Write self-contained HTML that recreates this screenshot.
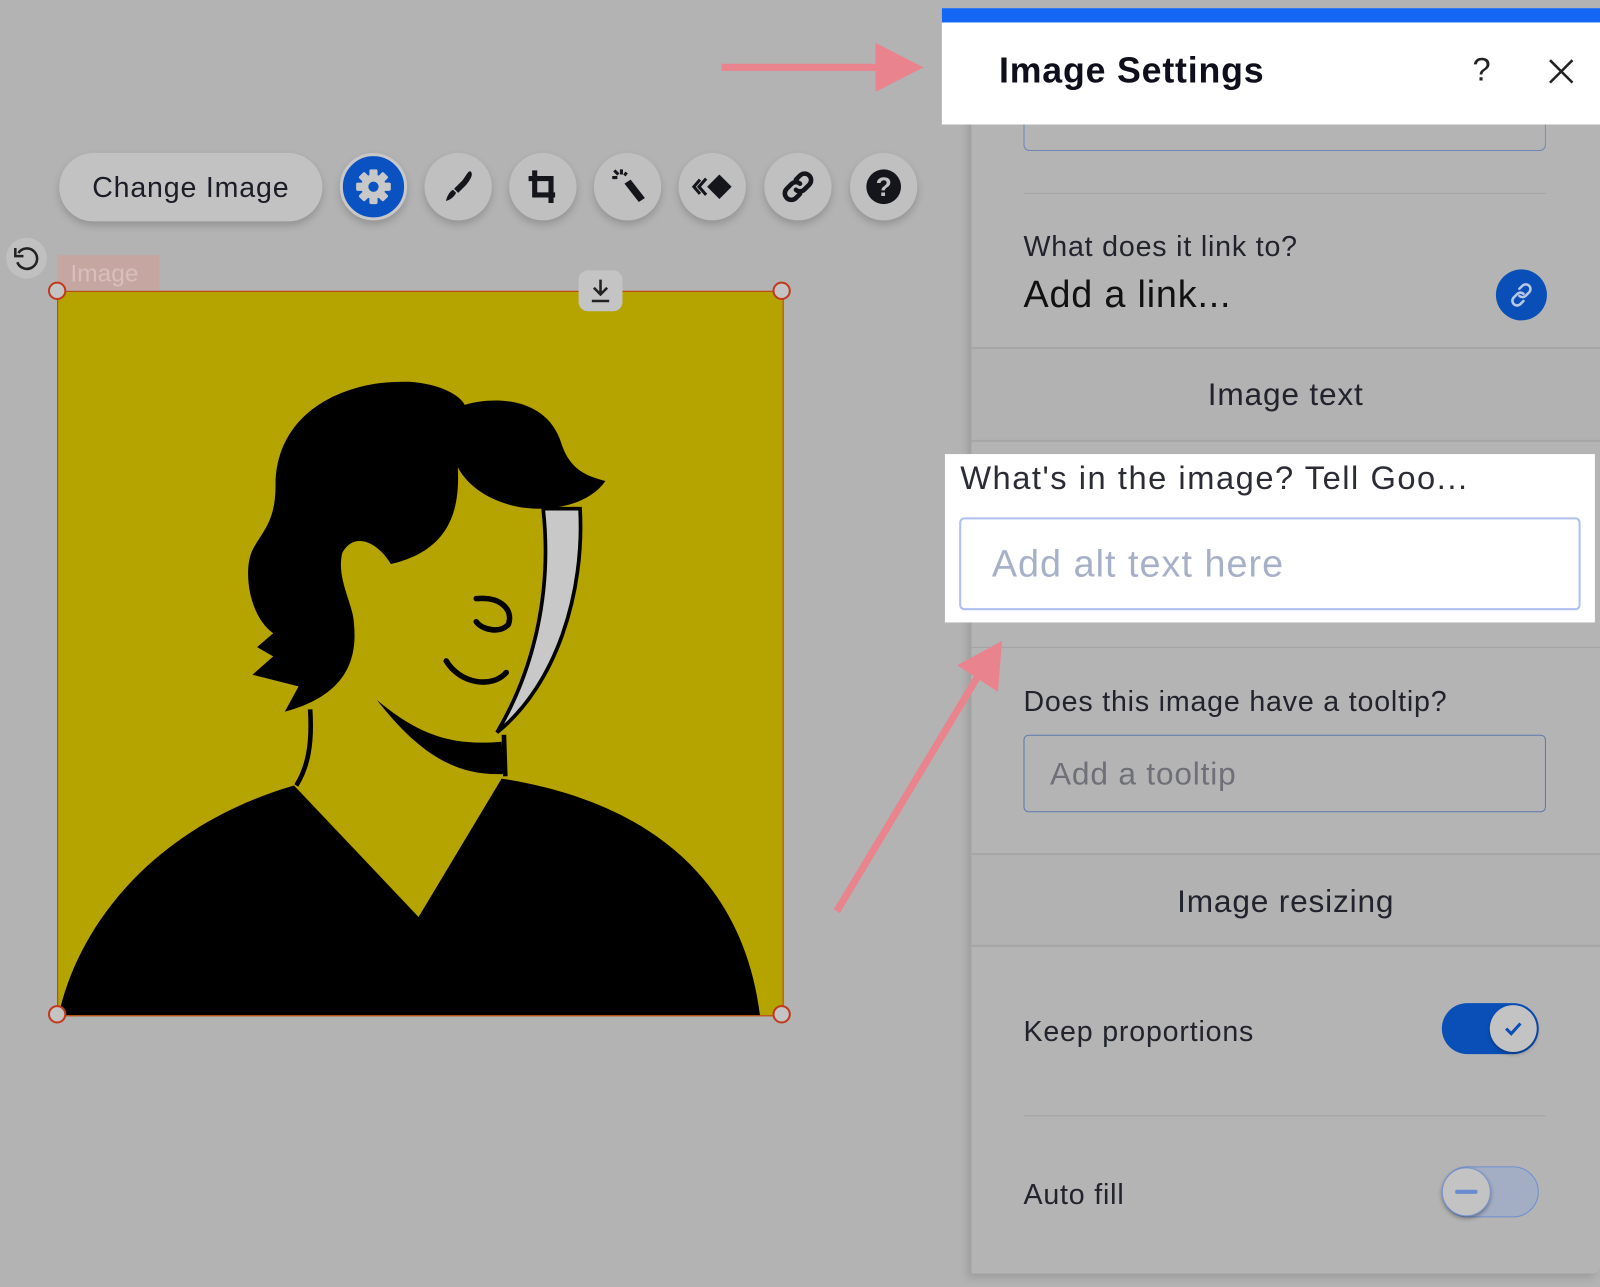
<!DOCTYPE html>
<html><head><meta charset="utf-8">
<style>
html,body{margin:0;padding:0;width:1600px;height:1287px;overflow:hidden;background:#b3b3b3;}
#s{position:absolute;left:0;top:0;width:1568px;height:1261px;transform:scale(1.02041);transform-origin:0 0;font-family:"Liberation Sans",sans-serif;color:#1a1b24;}
.a{position:absolute;}
.btn{position:absolute;top:150px;width:66px;height:66px;border-radius:50%;background:#c0c0c0;box-shadow:0 4px 8px rgba(0,0,0,.18);}
.btn svg{position:absolute;left:13px;top:13px;}
.line{position:absolute;left:1003px;width:512px;height:1px;background:#a3a3a3;}
.band{position:absolute;left:952px;width:616px;border-top:2px solid #a6a6a6;border-bottom:2px solid #a6a6a6;background:#b2b2b2;text-align:center;font-size:31px;color:#22232c;letter-spacing:0.8px;}
.lbl{position:absolute;left:1003px;font-size:28px;color:#22232c;white-space:nowrap;letter-spacing:0.8px;}
</style></head><body><div id="s">

<!-- toolbar -->
<div class="a" style="left:58px;top:150px;width:258px;height:67px;border-radius:34px;background:#c2c2c2;box-shadow:0 4px 8px rgba(0,0,0,.18);font-size:28px;line-height:67px;text-align:center;color:#1c1d26;letter-spacing:0.8px;">Change Image</div>
<div class="btn" style="left:333px;background:#0a51c2;border:3px solid #c8c8c8;box-sizing:border-box;"><svg width="40" height="40" viewBox="0 0 40 40" style="left:10px;top:10px"><g fill="#c8c8c8"><circle cx="20" cy="20" r="12"/><g id="t"><rect x="16" y="3" width="8" height="8" rx="1.5"/></g><use href="#t" transform="rotate(45 20 20)"/><use href="#t" transform="rotate(90 20 20)"/><use href="#t" transform="rotate(135 20 20)"/><use href="#t" transform="rotate(180 20 20)"/><use href="#t" transform="rotate(225 20 20)"/><use href="#t" transform="rotate(270 20 20)"/><use href="#t" transform="rotate(315 20 20)"/></g><circle cx="20" cy="20" r="5" fill="#0a51c2"/></svg></div>
<div class="btn" style="left:416px;"><svg width="40" height="40" viewBox="0 0 40 40"><path d="M32 5c3 2 1 7-4 13l-8 8-4-4 8-8c4-5 6-10 8-9z" fill="#15161c"/><path d="M15 23l3 3c-2 4-6 7-10 8 1-4 3-9 7-11z" fill="#15161c"/></svg></div>
<div class="btn" style="left:499px;"><svg width="40" height="40" viewBox="0 0 40 40"><path d="M12 4v24h20M6 12h22v24" fill="none" stroke="#15161c" stroke-width="5"/></svg></div>
<div class="btn" style="left:582px;"><svg width="40" height="40" viewBox="0 0 40 40"><path d="M17 17l6-4 14 18-6 4z" fill="#15161c"/><g stroke="#15161c" stroke-width="3"><path d="M14 3v5M5 11h5M7 4l4 4M19 6l-2 3"/></g></svg></div>
<div class="btn" style="left:665px;"><svg width="40" height="40" viewBox="0 0 40 40"><path d="M27 8l12 12-12 12-12-12z" fill="#15161c"/><path d="M14 12l-7 8 7 8M8 13l-6 7 6 7" fill="none" stroke="#15161c" stroke-width="3"/></svg></div>
<div class="btn" style="left:749px;"><svg width="40" height="40" viewBox="0 0 40 40"><g fill="none" stroke="#15161c" stroke-width="4.5" stroke-linecap="round"><path d="M18 13l4-4a6 6 0 019 9l-5 5a6 6 0 01-8 0"/><path d="M22 27l-4 4a6 6 0 01-9-9l5-5a6 6 0 018 0"/></g></svg></div>
<div class="btn" style="left:833px;"><svg width="40" height="40" viewBox="0 0 40 40"><circle cx="20" cy="20" r="17" fill="#15161c"/><text x="20" y="29" font-size="26" font-weight="bold" text-anchor="middle" fill="#c0c0c0" font-family="Liberation Sans">?</text></svg></div>

<div class="a" style="left:6px;top:233px;width:40px;height:40px;border-radius:50%;background:#c0c0c0;"><svg width="40" height="40" viewBox="0 0 40 40"><path d="M12 15a10 10 0 1 1-1 9" fill="none" stroke="#222" stroke-width="2.5"/><path d="M9 10v8h8" fill="none" stroke="#222" stroke-width="2.5"/></svg></div>
<div class="a" style="left:56px;top:250px;width:100px;height:34px;background:#c6a6a0;color:#d8bfbb;font-size:24px;line-height:38px;padding-left:13px;box-sizing:border-box;">Image</div>

<!-- image -->
<div class="a" style="left:56px;top:285px;width:710px;height:709px;border:1px solid #c23a1c;background:#b5a300;overflow:hidden;">
<svg width="710" height="709" viewBox="0 0 1568 1568">
<path d="M0,1568 C40,1380 200,1160 510,1070 L780,1355 L960,1055 C1250,1100 1480,1250 1520,1568 Z" fill="#000"/>
<path d="M545,905 C550,980 540,1030 515,1070" fill="none" stroke="#000" stroke-width="10"/>
<path d="M965,960 L968,1050" fill="none" stroke="#000" stroke-width="10"/>
<path d="M690,885 C780,960 850,985 960,975 L965,1045 C860,1050 780,1000 690,885Z" fill="#000"/>
<path d="M1050,470 L1130,470 C1140,650 1080,850 950,955 C1030,820 1070,650 1050,470Z" fill="#c8c8c8" stroke="#000" stroke-width="8"/>
<path d="M470,420 C470,260 620,190 760,195 C830,200 870,225 880,245 C950,225 1060,230 1090,330 C1110,390 1150,400 1185,410 C1150,460 1080,470 1040,470 C960,470 890,430 865,380 C870,470 850,560 720,590 C690,540 640,520 615,565 C600,620 640,680 640,720 C650,820 600,880 490,910 L520,855 L420,830 L465,790 L430,770 L465,740 C410,700 400,600 420,560 C440,520 470,500 470,420Z" fill="#000"/>
<path d="M905,665 C960,660 985,690 975,720 C960,740 920,735 905,715" fill="none" stroke="#000" stroke-width="12" stroke-linecap="round"/>
<path d="M840,800 C870,850 940,860 970,825" fill="none" stroke="#000" stroke-width="12" stroke-linecap="round"/>
</svg></div>
<div class="a" style="left:47px;top:276px;width:18px;height:18px;border:2px solid #c23a1c;border-radius:50%;background:#c4c4c4;box-sizing:border-box;"></div>
<div class="a" style="left:757px;top:276px;width:18px;height:18px;border:2px solid #c23a1c;border-radius:50%;background:#c4c4c4;box-sizing:border-box;"></div>
<div class="a" style="left:47px;top:985px;width:18px;height:18px;border:2px solid #c23a1c;border-radius:50%;background:#c4c4c4;box-sizing:border-box;"></div>
<div class="a" style="left:757px;top:985px;width:18px;height:18px;border:2px solid #c23a1c;border-radius:50%;background:#c4c4c4;box-sizing:border-box;"></div>
<div class="a" style="left:567px;top:265px;width:43px;height:40px;border-radius:9px;background:#c4c4c4;"><svg width="43" height="40" viewBox="0 0 43 40"><path d="M21.5 9v14M15 17l6.5 6.5L28 17M13 30h17" fill="none" stroke="#222" stroke-width="2.5"/></svg></div>

<!-- panel -->
<div class="a" style="left:952px;top:110px;width:616px;height:1138px;background:#b4b4b4;box-shadow:-4px 4px 8px rgba(0,0,0,.12);border-radius:0 0 8px 0;"></div>
<div class="a" style="left:1003px;top:110px;width:510px;height:37px;border:1px solid #6f86b5;border-top:none;border-radius:0 0 6px 6px;"></div>
<div class="line" style="top:189px;"></div>
<div class="lbl" style="top:226px;">What does it link to?</div>
<div class="lbl" style="top:268px;font-size:37px;color:#111;">Add a link...</div>
<div class="a" style="left:1466px;top:264px;width:50px;height:50px;border-radius:50%;background:#0a4fb8;"><svg width="50" height="50" viewBox="0 0 50 50"><g fill="none" stroke="#b9c7e6" stroke-width="2.5" stroke-linecap="round"><path d="M23 19l3-3a4.5 4.5 0 016.5 6.5l-3.5 3.5a4.5 4.5 0 01-6 0"/><path d="M27 31l-3 3a4.5 4.5 0 01-6.5-6.5l3.5-3.5a4.5 4.5 0 016 0"/></g></svg></div>
<div class="band" style="top:340px;height:89px;line-height:89px;">Image text</div>

<div class="a" style="left:926px;top:445px;width:637px;height:165px;background:#fff;"></div>
<div class="a" style="left:941px;top:450px;font-size:32px;color:#2b2c35;white-space:nowrap;letter-spacing:1.5px;">What's in the image? Tell Goo...</div>
<div class="a" style="left:940px;top:507px;width:609px;height:91px;border:2px solid #aebff0;border-radius:5px;box-sizing:border-box;font-size:37px;line-height:88px;padding-left:30px;color:#a6b0c9;letter-spacing:1px;">Add alt text here</div>

<div class="line" style="top:634px;left:952px;width:616px;"></div>
<div class="lbl" style="top:672px;">Does this image have a tooltip?</div>
<div class="a" style="left:1003px;top:720px;width:512px;height:76px;border:1px solid #5d78ad;border-radius:5px;box-sizing:border-box;font-size:31px;line-height:76px;padding-left:25px;color:#6f7077;letter-spacing:0.8px;">Add a tooltip</div>
<div class="band" style="top:836px;height:88px;line-height:92px;">Image resizing</div>

<div class="lbl" style="top:995px;">Keep proportions</div>
<div class="a" style="left:1413px;top:983px;width:95px;height:50px;border-radius:25px;background:#0a4fb8;"></div>
<div class="a" style="left:1460px;top:985px;width:46px;height:46px;border-radius:50%;background:#c3c3c3;box-shadow:0 2px 4px rgba(0,0,0,.3);"><svg width="46" height="46" viewBox="0 0 46 46"><path d="M16 23l5 5 9-10" fill="none" stroke="#0a4fb8" stroke-width="3"/></svg></div>
<div class="line" style="top:1093px;"></div>
<div class="lbl" style="top:1155px;">Auto fill</div>
<div class="a" style="left:1413px;top:1143px;width:95px;height:50px;border-radius:25px;background:#a3aec5;border:1px solid #6f8fd0;box-sizing:border-box;"></div>
<div class="a" style="left:1413px;top:1144px;width:48px;height:48px;border-radius:50%;background:#c3c3c3;box-shadow:0 2px 4px rgba(0,0,0,.35);border:1px solid #7896d0;box-sizing:border-box;"><div style="position:absolute;left:12px;top:21px;width:22px;height:4px;border-radius:2px;background:#6a8bcf;"></div></div>

<!-- arrows -->
<svg class="a" style="left:0;top:0" width="1568" height="1261">
<path d="M707,66 L870,66" stroke="#e9848f" stroke-width="7"/>
<path d="M858,42 L905,66 L858,90Z" fill="#e9848f"/>
<path d="M820,893 L960,660" stroke="#e9848f" stroke-width="7"/>
<path d="M938,652 L982,628 L978,678Z" fill="#e9848f"/>
</svg>

<!-- header -->
<div class="a" style="left:923px;top:8px;width:645px;height:114px;background:#fff;"></div>
<div class="a" style="left:923px;top:8px;width:645px;height:14px;background:#1466f5;"></div>
<div class="a" style="left:979px;top:50px;font-size:35px;font-weight:bold;color:#0e0f1a;white-space:nowrap;letter-spacing:0.8px;">Image Settings</div>
<div class="a" style="left:1443px;top:50px;font-size:32px;color:#222;">?</div>
<svg class="a" style="left:1516px;top:56px" width="30" height="30"><path d="M3 3l22 22M25 3L3 25" stroke="#222" stroke-width="2.5"/></svg>
</div></body></html>
